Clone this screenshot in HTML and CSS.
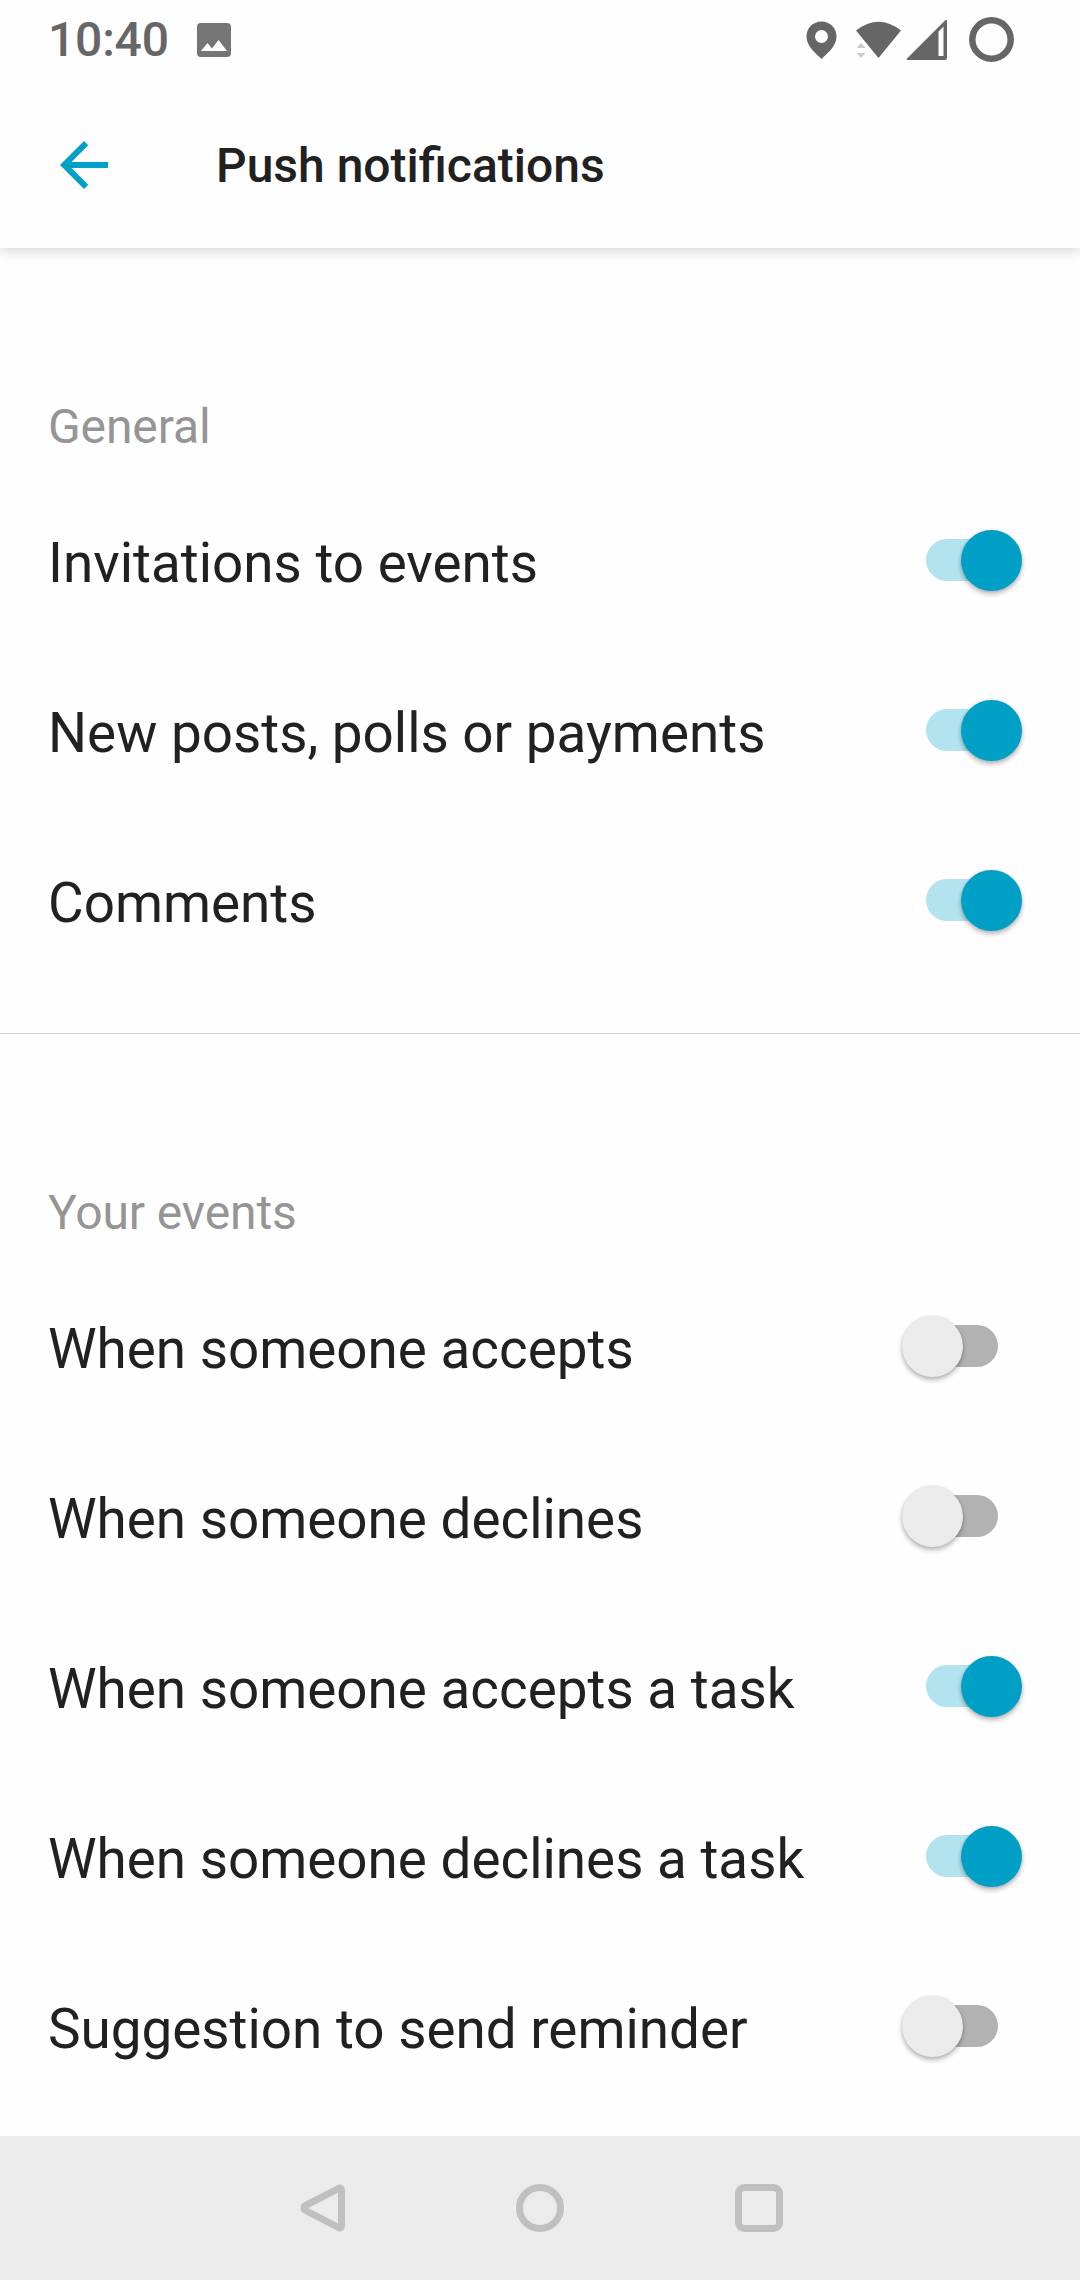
FILE: index.html
```html
<!DOCTYPE html>
<html lang="en">

<head>
  <meta charset="utf-8">
  <title>Push notifications</title>
  <link rel="stylesheet" href="styles.css">
</head>

<body>
  <div class="status-bar">
    <span class="time">10:40</span>
    <svg class="picture-icon" width="34" height="34" viewBox="0 0 34 34">
      <path fill="#757575" fill-rule="evenodd" d="M4 0h26a4 4 0 0 1 4 4v26a4 4 0 0 1-4 4H4a4 4 0 0 1-4-4V4a4 4 0 0 1 4-4zM4 28h26l-8.500-11-6.500 8.500-4.500-5.500z"/>
    </svg>
    <div class="status-icons">
      <svg width="142" height="46" viewBox="0 0 142 46">
        <g fill="#666">
          <path fill-rule="evenodd" d="M15.500 4.500C7 4.500 0.500 11 0.500 19.500c0 10 10 17.500 15 22.500 5-5 15-12.500 15-22.500C30.500 11 24 4.500 15.500 4.500zm0 8.500a6.500 6.500 0 1 1 0 13 6.500 6.500 0 0 1 0-13z"/>
          <path d="M50 13.500Q72.500-4 95 13.500L72.500 41z"/>
          <path fill-rule="evenodd" d="M139.500 3Q141 2.500 141 4v37q0 2-2 2h-37q-2 0-1-1.500zM132.500 14.500V39h5V9.500z"/>
        </g>
        <path fill="#ccc" d="M50.500 31l4.500-5 4.500 5zM50.500 36h9l-4.500 5z"/>
      </svg>
      <svg width="46" height="46" viewBox="0 0 46 46">
        <circle cx="22.500" cy="22.500" r="19.200" fill="none" stroke="#666" stroke-width="6.500"/>
      </svg>
    </div>
  </div>

  <header class="app-bar">
    <svg class="back" width="72" height="72" viewBox="0 0 24 24">
      <path fill="#00a0c8" d="M20 11H7.830l5.590-5.590L12 4l-8 8 8 8 1.410-1.410L7.830 13H20v-2z"/>
    </svg>
    <h1>Push notifications</h1>
  </header>

  <main>
    <section>
      <h2>General</h2>
      <ul>
        <li><span>Invitations to events</span><div class="switch on"></div></li>
        <li><span>New posts, polls or payments</span><div class="switch on"></div></li>
        <li><span>Comments</span><div class="switch on"></div></li>
      </ul>
    </section>
    <section>
      <h2>Your events</h2>
      <ul>
        <li><span>When someone accepts</span><div class="switch"></div></li>
        <li><span>When someone declines</span><div class="switch"></div></li>
        <li><span>When someone accepts a task</span><div class="switch on"></div></li>
        <li><span>When someone declines a task</span><div class="switch on"></div></li>
        <li><span>Suggestion to send reminder</span><div class="switch"></div></li>
      </ul>
    </section>
  </main>

  <nav class="nav-bar">
    <svg width="48" height="50" viewBox="0 0 48 50">
      <path d="M41.500 5.500c1.500-1 3 0 3 1.500v36c0 1.500-1.500 2.500-3 1.500L8.500 27.500c-2-1-2-4 0-5z"/>
    </svg>
    <svg width="48" height="50" viewBox="0 0 48 50">
      <circle cx="24" cy="25" r="20.500"/>
    </svg>
    <svg width="48" height="50" viewBox="0 0 48 50">
      <rect x="3.500" y="4.500" width="41" height="41" rx="6"/>
    </svg>
  </nav>
</body>

</html>
```

FILE: styles.css
```css
* {
  box-sizing: border-box;
}

body {
  margin: 0;
  height: 2280px;
  display: flex;
  flex-direction: column;
  overflow: hidden;
  background-color: #fefefe;
  color: #212121;
  font-family: Roboto, sans-serif;
}

svg {
  display: block;
  flex-shrink: 0;
}

.status-bar {
  height: 80px;
  display: flex;
  align-items: center;
  padding: 0 65px 0 48px;
}

.time {
  width: 149px;
  font-size: 48px;
  font-weight: 500;
  line-height: 80px;
  letter-spacing: -0.2px;
  color: #666;
}

.status-icons {
  margin-left: auto;
  display: flex;
  gap: 21px;
}

.app-bar {
  height: 168px;
  display: flex;
  align-items: center;
  padding-left: 48px;
  box-shadow: 0 3px 12px rgba(0, 0, 0, 0.16);
  /* only keep the shadow below the bar */
  clip-path: inset(0 0 -20px 0);
}

.back {
  margin-top: 1px;
}

h1 {
  margin: 3px 0 0 96px;
  font-size: 48px;
  font-weight: 500;
  line-height: 72px;
}

main {
  flex: 1;
}

section {
  padding-bottom: 48px;
}

section + section {
  border-top: 1px solid #ccc;
  padding-bottom: 0;
}

h2 {
  margin: 0;
  padding: 151px 48px 20px;
  font-size: 48px;
  font-weight: 400;
  line-height: 56px;
  letter-spacing: -0.1px;
  color: #959595;
}

ul {
  list-style-type: none;
  margin: 0;
  padding: 0;
}

li {
  height: 170px;
  display: flex;
  align-items: center;
  justify-content: space-between;
  padding: 0 82px 0 48px;
  font-size: 54.800px;
}

li span {
  padding-top: 6px;
}

.switch {
  position: relative;
  width: 72px;
  height: 42px;
  border-radius: 21px;
  background-color: #b2b2b2;
}

/* the knob hangs over the end of the track */
.switch:after {
  content: "";
  position: absolute;
  top: -9px;
  left: -24px;
  width: 61px;
  height: 61px;
  border-radius: 50%;
  background-color: #ebebeb;
  box-shadow: 0 3px 5px rgba(0, 0, 0, 0.28), 0 0 3px rgba(0, 0, 0, 0.1);
}

.switch.on {
  background-color: #b2e3ee;
}

.switch.on:after {
  left: 35px;
  background-color: #00a0c6;
}

.nav-bar {
  height: 144px;
  display: flex;
  align-items: center;
  justify-content: center;
  gap: 171px;
  background-color: #ebebeb;
}

.nav-bar svg {
  fill: none;
  stroke: #c0c0c0;
  stroke-width: 7;
}
```
